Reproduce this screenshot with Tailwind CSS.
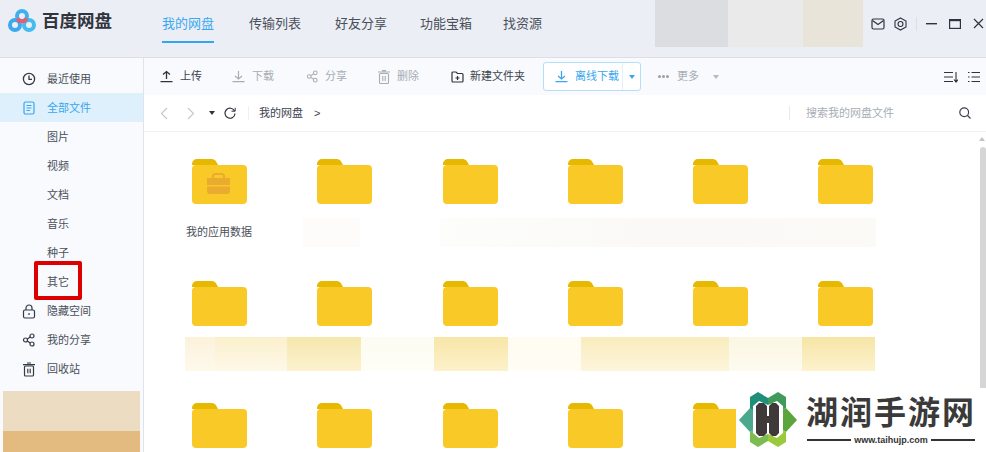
<!DOCTYPE html>
<html>
<head>
  <meta charset="UTF-8">
  <script src="https://cdn.jsdelivr.net/npm/@tailwindcss/browser@4"></script>
</head>
<body class="w-[986px] h-[452px] overflow-hidden bg-white font-['Liberation_Sans','Noto_Sans_CJK_SC',sans-serif] text-[#4a505a]">
  <div class="relative w-[986px] h-[452px] flex flex-col overflow-hidden">
    <!-- Header -->
    <header class="h-[58px] shrink-0 flex items-start bg-[#eceef5] border-b border-[#dcdfe6]">
      <div class="w-[162px] shrink-0 h-full flex items-center pl-[8px] pb-[15px]">
        <svg width="28" height="24" viewBox="0 0 28 24" fill="none">
          <circle cx="7" cy="16" r="5" stroke="#3aa9f0" stroke-width="4"/>
          <circle cx="21" cy="16" r="5" stroke="#42bdec" stroke-width="4"/>
          <circle cx="14" cy="7" r="5" stroke="#3fb0ee" stroke-width="4"/>
          <path d="M9.500 9.500a5 5 0 0 0 9 0" stroke="#ec5a70" stroke-width="4"/>
        </svg>
        <span class="ml-[6px] text-[17.500px] font-bold text-[#30343c]">百度网盘</span>
      </div>
      <nav class="flex text-[13px] h-full">
        <a class="relative h-full flex items-center pb-[10px] text-[#3aaaf0]">我的网盘<span class="absolute left-0 right-0 bottom-[14px] h-[2px] bg-[#2fa8ee]"></span></a>
        <a class="h-full flex items-center pb-[10px] ml-[35px]">传输列表</a>
        <a class="h-full flex items-center pb-[10px] ml-[34px]">好友分享</a>
        <a class="h-full flex items-center pb-[10px] ml-[33px]">功能宝箱</a>
        <a class="h-full flex items-center pb-[10px] ml-[31px]">找资源</a>
      </nav>
      <div class="ml-auto flex h-[47px]">
        <div class="w-[73px] bg-[#dcdde0]"></div>
        <div class="w-[75px] bg-[#eaeaea]"></div>
        <div class="w-[60px] bg-[#e8e4da]"></div>
      </div>
      <div class="w-[123px] h-[47px] flex items-center pl-[8px] text-[#2f343c]">
        <svg width="14" height="12" viewBox="0 0 14 12" fill="none" stroke="currentColor" stroke-width="1.200"><rect x="1" y="1" width="12" height="10" rx="1.500"/><path d="M1.500 2.500 7 6.500l5.500-4"/></svg>
        <svg class="ml-[9px]" width="13" height="14" viewBox="0 0 13 14" fill="none" stroke="currentColor" stroke-width="1.100"><path d="M6.500 1 12 4v6l-5.500 3L1 10V4z"/><circle cx="6.500" cy="7" r="2.500"/></svg>
        <span class="ml-[9px] w-px h-[14px] bg-[#dcdfe6]"></span>
        <svg class="ml-[9px]" width="11" height="2" viewBox="0 0 11 2"><rect width="11" height="1.400" fill="currentColor"/></svg>
        <svg class="ml-[12px]" width="12" height="10" viewBox="0 0 12 10" fill="none" stroke="currentColor"><rect x="0.600" y="0.600" width="10.800" height="8.800" stroke-width="1.200"/><path d="M0.600 1.400h10.800" stroke-width="1.600"/></svg>
        <svg class="ml-[12px]" width="11" height="11" viewBox="0 0 11 11" stroke="currentColor" stroke-width="1.200"><path d="M1 1l9 9M10 1 1 10"/></svg>
      </div>
    </header>

    <div class="flex flex-1 min-h-0">
      <!-- Sidebar -->
      <aside class="relative w-[144px] shrink-0 flex flex-col bg-[#f8fafd] border-r border-[#dfe3ea] pt-[6px] text-[11px]">
        <a class="h-[29px] shrink-0 flex items-center pt-[1px] pl-[22px]">
          <svg class="w-[14px] mr-[11px]" width="14" height="14" viewBox="0 0 14 14" fill="none" stroke="#333a44" stroke-width="1.300"><circle cx="7" cy="7" r="5.600"/><path d="M7 3.600V7.300h3"/></svg>最近使用
        </a>
        <a class="h-[29px] shrink-0 flex items-center pt-[1px] pl-[22px] bg-[#ddf0fc] text-[#39a6ee]">
          <svg class="w-[14px] mr-[11px]" width="14" height="14" viewBox="0 0 14 14" fill="none" stroke="#39a6ee" stroke-width="1.200"><rect x="2" y="1" width="10" height="12" rx="1.500"/><path d="M4.500 4.500h5M4.500 7h5M4.500 9.500h3.500"/></svg>全部文件
        </a>
        <a class="h-[29px] shrink-0 flex items-center pt-[1px] pl-[47px]">图片</a>
        <a class="h-[29px] shrink-0 flex items-center pt-[1px] pl-[47px]">视频</a>
        <a class="h-[29px] shrink-0 flex items-center pt-[1px] pl-[47px]">文档</a>
        <a class="h-[29px] shrink-0 flex items-center pt-[1px] pl-[47px]">音乐</a>
        <a class="h-[29px] shrink-0 flex items-center pt-[1px] pl-[47px]">种子</a>
        <a class="h-[29px] shrink-0 flex items-center pt-[1px] pl-[47px]">其它</a>
        <a class="h-[29px] shrink-0 flex items-center pt-[1px] pl-[22px]">
          <svg class="w-[14px] mr-[11px]" width="14" height="15" viewBox="0 0 14 15" fill="none" stroke="#333a44" stroke-width="1.200"><rect x="1.500" y="6" width="11" height="8" rx="1.500"/><path d="M4 6V4a3 3 0 0 1 6 0v2M7 9v2"/></svg>隐藏空间
        </a>
        <a class="h-[29px] shrink-0 flex items-center pt-[1px] pl-[22px]">
          <svg class="w-[14px] mr-[11px]" width="14" height="14" viewBox="0 0 14 14" fill="none" stroke="#333a44" stroke-width="1.200"><circle cx="3.500" cy="7" r="2"/><circle cx="10" cy="3" r="2"/><circle cx="10" cy="11" r="2"/><path d="M5.300 6 8.200 4M5.300 8l2.900 2"/></svg>我的分享
        </a>
        <a class="h-[29px] shrink-0 flex items-center pt-[1px] pl-[22px]">
          <svg class="w-[14px] mr-[11px]" width="14" height="15" viewBox="0 0 14 15" fill="none" stroke="#333a44" stroke-width="1.200"><rect x="2.500" y="4" width="9" height="10" rx="1"/><path d="M1 2.600h12M5 1h4M5.800 6.800v4.500M8.200 6.800v4.500"/></svg>回收站
        </a>
        <div class="mt-[8px] mx-[3px] flex-1 flex flex-col">
          <div class="h-[40px] bg-[#ecdcc2]"></div>
          <div class="flex-1 bg-[#e3bb80]"></div>
        </div>
        <div class="absolute left-[34px] top-[203px] w-[48px] h-[39px] border-[4px] border-[#dd0000] rounded-[2px]"></div>
      </aside>

      <main class="flex-1 min-w-0 flex flex-col">
        <!-- Toolbar -->
        <div class="h-[37px] shrink-0 flex items-center bg-[#f8fafd] text-[11px] pl-[16px]">
          <a class="flex items-center text-[#3c434e]"><svg class="mr-[7px]" width="13" height="13" viewBox="0 0 13 13" fill="none" stroke="#2f343c" stroke-width="1.300"><path d="M6.500 9V1.500M3 4.500l3.500-3 3.500 3M.5 11.700h12"/></svg>上传</a>
          <a class="flex items-center ml-[30px] text-[#a8adb5]"><svg class="mr-[7px]" width="13" height="13" viewBox="0 0 13 13" fill="none" stroke="#a8adb5" stroke-width="1.200"><path d="M6.500 1v8M3 6l3.500 3L10 6M.5 11.700h12"/></svg>下载</a>
          <a class="flex items-center ml-[32px] text-[#a8adb5]"><svg class="mr-[6px]" width="13" height="13" viewBox="0 0 14 14" fill="none" stroke="#a8adb5" stroke-width="1.100"><circle cx="3.500" cy="7" r="2"/><circle cx="10" cy="3" r="2"/><circle cx="10" cy="11" r="2"/><path d="M5.300 6 8.200 4M5.300 8l2.900 2"/></svg>分享</a>
          <a class="flex items-center ml-[31px] text-[#a8adb5]"><svg class="mr-[7px]" width="12" height="14" viewBox="0 0 12 14" fill="none" stroke="#a8adb5" stroke-width="1.100"><rect x="1.500" y="3.500" width="9" height="10" rx="1"/><path d="M0 2h12M4 .6h4M4.800 6v5M7.200 6v5"/></svg>删除</a>
          <a class="flex items-center ml-[32px] text-[#3c434e]"><svg class="mr-[6px]" width="13" height="12" viewBox="0 0 13 12" fill="none" stroke="#2f343c" stroke-width="1.200"><path d="M1 2a1 1 0 0 1 1-1h3l1.500 1.500H11a1 1 0 0 1 1 1V10a1 1 0 0 1-1 1H2a1 1 0 0 1-1-1zM6.500 5v4M4.500 7h4"/></svg>新建文件夹</a>
          <div class="ml-[18px] w-[98px] h-[29px] flex items-center bg-white border border-[#b5dff8] rounded-[3px] text-[#39a6ee]">
            <div class="flex-1 flex items-center pl-[11px]"><svg class="mr-[7px]" width="13" height="13" viewBox="0 0 13 13" fill="none" stroke="#39a6ee" stroke-width="1.300"><path d="M6.500 1v8M3 6l3.500 3L10 6M.5 11.700h12"/></svg>离线下载</div>
            <div class="w-[18px] h-full border-l border-[#e3effa] flex items-center justify-center"><span class="border-x-[3px] border-x-transparent border-t-[4px] border-t-[#39a6ee]"></span></div>
          </div>
          <a class="flex items-center ml-[17px] text-[#a8adb5]"><span class="flex gap-[1px] mr-[8px]"><i class="w-[3px] h-[3px] rounded-full bg-[#9aa0a8]"></i><i class="w-[3px] h-[3px] rounded-full bg-[#9aa0a8]"></i><i class="w-[3px] h-[3px] rounded-full bg-[#9aa0a8]"></i></span>更多<span class="ml-[14px] border-x-[3px] border-x-transparent border-t-[4px] border-t-[#b5b9c0]"></span></a>
          <div class="ml-auto flex items-center pr-[6px] gap-[10px]">
            <svg width="14" height="12" viewBox="0 0 14 12" fill="none" stroke="#2f343c" stroke-width="1.100"><path d="M0 1.500h9M0 6h9M0 10.500h9M12 1v10M10 8.500l2 2.500 2-2.500"/></svg>
            <svg width="12" height="12" viewBox="0 0 12 12" fill="none" stroke="#2f343c" stroke-width="1.100"><path d="M3.500 1.500H12M3.500 6H12M3.500 10.500H12M0 1.500h1.500M0 6h1.500M0 10.500h1.500"/></svg>
          </div>
        </div>

        <!-- Path bar -->
        <div class="h-[37px] shrink-0 flex items-center bg-white border-b border-[#eef0f4] text-[11px] pl-[16px]">
          <svg width="8" height="13" viewBox="0 0 8 13" fill="none" stroke="#c3c7cd" stroke-width="1.100"><path d="M7 1 1.500 6.500 7 12"/></svg>
          <svg class="ml-[19px]" width="8" height="13" viewBox="0 0 8 13" fill="none" stroke="#c3c7cd" stroke-width="1.100"><path d="m1 1 5.500 5.500L1 12"/></svg>
          <span class="ml-[14px] border-x-[3px] border-x-transparent border-t-[4px] border-t-[#2f343c]"></span>
          <svg class="ml-[9px]" width="12" height="12" viewBox="0 0 12 12" fill="none" stroke="#2f343c" stroke-width="1.200"><path d="M10.500 4A5 5 0 1 0 11 6.500"/><path d="M7.500 4.200h3.700V.8" stroke-width="1"/></svg>
          <span class="ml-[12px] w-px h-[14px] bg-[#eef0f4]"></span>
          <span class="ml-[10px] text-[#3c434e]">我的网盘</span>
          <span class="ml-[11px] text-[#3c434e]">&gt;</span>
          <div class="ml-auto w-[197px] h-[14px] border-l border-[#e6e8ec] flex items-center pl-[16px] text-[#a8adb5]">
            搜索我的网盘文件
            <svg class="ml-auto mr-[15px]" width="12" height="12" viewBox="0 0 12 12" fill="none" stroke="#3c434e" stroke-width="1.200"><circle cx="5.200" cy="5.200" r="4.400"/><path d="m8.500 8.500 3 3"/></svg>
          </div>
        </div>

        <!-- File grid -->
        <div class="relative flex-1 min-h-0 overflow-hidden pl-[48px] pt-[27px]">
          <span class="absolute right-[1px] top-[5px] border-x-[3px] border-x-transparent border-b-[4px] border-b-[#c4c4c4]"></span>
          <div class="absolute right-0 top-[15px] w-[6px] h-[241px] rounded-t-[3px] bg-[#d6d6d6]"></div>
          <div class="grid grid-cols-[repeat(6,125.3px)] auto-rows-[122px] text-[11px]">
            <div class="relative">
              <svg width="55" height="46" viewBox="0 0 55 46"><path d="M0 5a5 5 0 0 1 5-5h14c4 0 5 2 7 6H0z" fill="#e6b800"/><rect y="6" width="55" height="39" rx="4" fill="#f9c928"/><path d="M15 19h23v7H15zM15 27.500h23V32a3 3 0 0 1-3 3H18a3 3 0 0 1-3-3z" fill="#e9ac2e"/><path d="M21 19v-1.500a2.500 2.500 0 0 1 2.500-2.500h6a2.500 2.500 0 0 1 2.500 2.500V19" fill="none" stroke="#e9ac2e" stroke-width="2.200"/></svg>
              <div class="absolute left-[-6px] top-[65px] whitespace-nowrap">我的应用数据</div>
              <div class="absolute left-[111px] top-[59px] w-[57px] h-[29px] bg-[#fdfcfb]"></div>
              <div class="absolute left-[248px] top-[59px] w-[436px] h-[29px] bg-gradient-to-r from-[#fdfdfc] via-[#faf9f7] to-[#fbfaf7]"></div>
            </div>
            <div><svg width="55" height="46" viewBox="0 0 55 46"><path d="M0 5a5 5 0 0 1 5-5h14c4 0 5 2 7 6H0z" fill="#e6b800"/><rect y="6" width="55" height="39" rx="4" fill="#f9c928"/></svg></div>
            <div><svg width="55" height="46" viewBox="0 0 55 46"><path d="M0 5a5 5 0 0 1 5-5h14c4 0 5 2 7 6H0z" fill="#e6b800"/><rect y="6" width="55" height="39" rx="4" fill="#f9c928"/></svg></div>
            <div><svg width="55" height="46" viewBox="0 0 55 46"><path d="M0 5a5 5 0 0 1 5-5h14c4 0 5 2 7 6H0z" fill="#e6b800"/><rect y="6" width="55" height="39" rx="4" fill="#f9c928"/></svg></div>
            <div><svg width="55" height="46" viewBox="0 0 55 46"><path d="M0 5a5 5 0 0 1 5-5h14c4 0 5 2 7 6H0z" fill="#e6b800"/><rect y="6" width="55" height="39" rx="4" fill="#f9c928"/></svg></div>
            <div><svg width="55" height="46" viewBox="0 0 55 46"><path d="M0 5a5 5 0 0 1 5-5h14c4 0 5 2 7 6H0z" fill="#e6b800"/><rect y="6" width="55" height="39" rx="4" fill="#f9c928"/></svg></div>

            <div class="relative">
              <svg width="55" height="46" viewBox="0 0 55 46"><path d="M0 5a5 5 0 0 1 5-5h14c4 0 5 2 7 6H0z" fill="#e6b800"/><rect y="6" width="55" height="39" rx="4" fill="#f9c928"/></svg>
              <!-- blurred file names -->
              <div class="absolute left-[-7px] top-[56px] w-[691px] h-[34px] flex">
                <div class="w-[30px] bg-gradient-to-b from-[#fcf2dc] to-[#fef9ec]"></div>
                <div class="w-[72px] bg-gradient-to-b from-[#fbf0cd] to-[#fef8e8]"></div>
                <div class="w-[74px] bg-gradient-to-b from-[#f6e7ae] to-[#fcf2cf]"></div>
                <div class="w-[73px] bg-gradient-to-b from-[#fdfcf2] to-[#fefdf6]"></div>
                <div class="w-[74px] bg-gradient-to-b from-[#f8e6a7] to-[#fcf1cb]"></div>
                <div class="w-[73px] bg-gradient-to-b from-[#fffdf1] to-[#fffdf4]"></div>
                <div class="w-[148px] bg-gradient-to-b from-[#f9ecbe] to-[#fdf5dc]"></div>
                <div class="w-[73px] bg-gradient-to-b from-[#fbf7e4] to-[#fdfbf0]"></div>
                <div class="w-[73px] bg-gradient-to-b from-[#f7e5a6] to-[#fcf2cd]"></div>
              </div>
            </div>
            <div><svg width="55" height="46" viewBox="0 0 55 46"><path d="M0 5a5 5 0 0 1 5-5h14c4 0 5 2 7 6H0z" fill="#e6b800"/><rect y="6" width="55" height="39" rx="4" fill="#f9c928"/></svg></div>
            <div><svg width="55" height="46" viewBox="0 0 55 46"><path d="M0 5a5 5 0 0 1 5-5h14c4 0 5 2 7 6H0z" fill="#e6b800"/><rect y="6" width="55" height="39" rx="4" fill="#f9c928"/></svg></div>
            <div><svg width="55" height="46" viewBox="0 0 55 46"><path d="M0 5a5 5 0 0 1 5-5h14c4 0 5 2 7 6H0z" fill="#e6b800"/><rect y="6" width="55" height="39" rx="4" fill="#f9c928"/></svg></div>
            <div><svg width="55" height="46" viewBox="0 0 55 46"><path d="M0 5a5 5 0 0 1 5-5h14c4 0 5 2 7 6H0z" fill="#e6b800"/><rect y="6" width="55" height="39" rx="4" fill="#f9c928"/></svg></div>
            <div><svg width="55" height="46" viewBox="0 0 55 46"><path d="M0 5a5 5 0 0 1 5-5h14c4 0 5 2 7 6H0z" fill="#e6b800"/><rect y="6" width="55" height="39" rx="4" fill="#f9c928"/></svg></div>

            <div><svg width="55" height="46" viewBox="0 0 55 46"><path d="M0 5a5 5 0 0 1 5-5h14c4 0 5 2 7 6H0z" fill="#e6b800"/><rect y="6" width="55" height="39" rx="4" fill="#f9c928"/></svg></div>
            <div><svg width="55" height="46" viewBox="0 0 55 46"><path d="M0 5a5 5 0 0 1 5-5h14c4 0 5 2 7 6H0z" fill="#e6b800"/><rect y="6" width="55" height="39" rx="4" fill="#f9c928"/></svg></div>
            <div><svg width="55" height="46" viewBox="0 0 55 46"><path d="M0 5a5 5 0 0 1 5-5h14c4 0 5 2 7 6H0z" fill="#e6b800"/><rect y="6" width="55" height="39" rx="4" fill="#f9c928"/></svg></div>
            <div><svg width="55" height="46" viewBox="0 0 55 46"><path d="M0 5a5 5 0 0 1 5-5h14c4 0 5 2 7 6H0z" fill="#e6b800"/><rect y="6" width="55" height="39" rx="4" fill="#f9c928"/></svg></div>
            <div><svg width="55" height="46" viewBox="0 0 55 46"><path d="M0 5a5 5 0 0 1 5-5h14c4 0 5 2 7 6H0z" fill="#e6b800"/><rect y="6" width="55" height="39" rx="4" fill="#f9c928"/></svg></div>
          </div>
        </div>
      </main>
    </div>

    <!-- Watermark -->
    <div class="absolute left-[736px] top-[388px] w-[250px] h-[64px] bg-white flex items-start">
      <svg class="ml-[3px] mt-[4px] shrink-0" width="58" height="55" viewBox="0 0 58 55">
        <path d="M11 5 19 0 29 6V28H11z" fill="#1f8f7a"/>
        <path d="M29 6 39 0 47 5V16L29 28z" fill="#3f9a5c"/>
        <path d="M47 16 58 28 47 40 29 28z" fill="#5aa53c"/>
        <path d="M47 40V50L39 55 29 49V28z" fill="#9ac93c"/>
        <path d="M29 49 19 55 11 50V40L29 28z" fill="#7cbc50"/>
        <path d="M11 40 0 28 11 16 29 28z" fill="#4ba88c"/>
        <path d="M20 9 29 13 38 9 44 14V41L38 46 29 42 20 46 14 41V14z" fill="#fff"/>
        <path d="M17 14 20 11h5l3 3v10h2V14l3-3h4l3 3v27l-3 3h-4l-3-3V31h-2v10l-3 3h-5l-3-3z" fill="#3f3a39"/>
      </svg>
      <div class="ml-[9px] mt-[5px] flex flex-col items-center">
        <div class="text-[32px] leading-[40px] font-bold text-[#3a3a3a] tracking-[2px] whitespace-nowrap">湖润手游网</div>
        <div class="flex items-center gap-[3px] text-[#333] text-[9px] font-bold leading-[12px] mt-[1px]">
          <span class="w-[44px] h-[1.500px] bg-[#333]"></span>www.taihujp.com<span class="w-[44px] h-[1.500px] bg-[#333]"></span>
        </div>
      </div>
    </div>
  </div>
</body>
</html>
